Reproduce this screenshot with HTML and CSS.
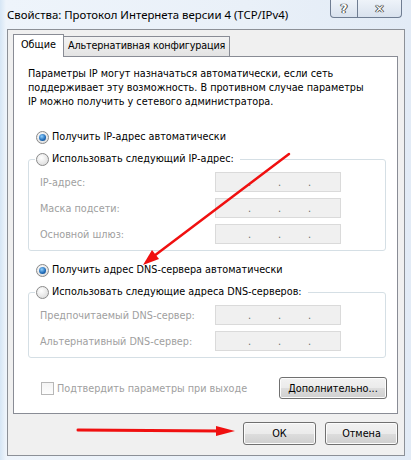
FILE: index.html
```html
<!DOCTYPE html>
<html lang="ru">
<head>
    <meta charset="UTF-8">
    <title>Свойства: Протокол Интернета версии 4 (TCP/IPv4)</title>
    <link rel="stylesheet" href="styles.css">
</head>
<body>
    <div class="window">
        <!-- Title bar -->
        <div class="titlebar">
            <span class="title">Свойства: Протокол Интернета версии 4 (TCP/IPv4)</span>
            <div class="caption">
                <span class="cap help">?</span>
                <span class="cap close">✕</span>
            </div>
        </div>

        <div class="client">
            <div class="tabs">
                <div class="tab active">Общие</div>
                <div class="tab">Альтернативная конфигурация</div>
            </div>

            <div class="panel">
                <p class="intro">Параметры IP могут назначаться автоматически, если сеть<br>поддерживает эту возможность. В противном случае параметры<br>IP можно получить у сетевого администратора.</p>

                <div class="option first"><span class="radio checked"></span>Получить IP-адрес автоматически</div>
                <fieldset class="group">
                    <legend class="option"><span class="radio"></span>Использовать следующий IP-адрес:</legend>
                    <div class="field"><span class="label">IP-адрес:</span><span class="ip"><i>.</i><i>.</i><i>.</i></span></div>
                    <div class="field"><span class="label">Маска подсети:</span><span class="ip"><i>.</i><i>.</i><i>.</i></span></div>
                    <div class="field"><span class="label">Основной шлюз:</span><span class="ip"><i>.</i><i>.</i><i>.</i></span></div>
                </fieldset>

                <div class="option second"><span class="radio checked"></span>Получить адрес DNS-сервера автоматически</div>
                <fieldset class="group">
                    <legend class="option"><span class="radio"></span>Использовать следующие адреса DNS-серверов:</legend>
                    <div class="field"><span class="label">Предпочитаемый DNS-сервер:</span><span class="ip"><i>.</i><i>.</i><i>.</i></span></div>
                    <div class="field"><span class="label">Альтернативный DNS-сервер:</span><span class="ip"><i>.</i><i>.</i><i>.</i></span></div>
                </fieldset>

                <div class="footer-row">
                    <span class="check"><span class="box"></span>Подтвердить параметры при выходе</span>
                    <button class="btn advanced">Дополнительно...</button>
                </div>
            </div>

            <div class="actions">
                <button class="btn">ОК</button>
                <button class="btn">Отмена</button>
            </div>
        </div>

        <!-- Red annotation arrows -->
        <svg class="arrows" width="411" height="460" viewBox="0 0 411 460">
            <line x1="289" y1="154" x2="154" y2="256" stroke="#f01010" stroke-width="2.5" stroke-linecap="round"/>
            <polygon points="143,265 159,259 152,250" fill="#f01010"/>
            <line x1="78" y1="430" x2="220" y2="431" stroke="#f01010" stroke-width="3" stroke-linecap="round"/>
            <polygon points="235,431 216,426 216,436" fill="#f01010"/>
        </svg>
    </div>
</body>
</html>
```

FILE: styles.css
```css
body {
    margin: 0;
    font-family: "DejaVu Sans Condensed", "DejaVu Sans", sans-serif;
    font-size: 10.75px;
    color: #000;
}
.window {
    position: relative;
    width: 411px;
    height: 460px;
    overflow: hidden;
    background: linear-gradient(90deg, #d6e6f5 0, #eef4fb 6px, #e9f0f8 60%, #e2ebf6 100%);
}
.titlebar {
    display: flex;
    height: 29px;
}
.title {
    padding: 7px 0 0 7px;
    font-family: "Noto Sans", sans-serif;
    font-size: 11.4px;
    line-height: 16px;
}
.caption {
    display: flex;
    margin-left: auto;
    margin-right: 9px;
    height: 18px;
}
.cap {
    display: flex;
    align-items: center;
    justify-content: center;
    height: 17px;
    border: 1px solid #6f7d92;
    border-top: none;
    background: linear-gradient(#eef3f9, #d9e2ee);
    color: #fff;
    font-family: "DejaVu Sans", sans-serif;
    font-weight: bold;
    font-size: 12px;
    text-shadow: 0 0 1px #333, 0 0 1px #333, 1px 0 0 #555, -1px 0 0 #555;
}
.help {
    width: 26px;
    border-radius: 0 0 0 4px;
}
.close {
    width: 43px;
    border-left: none;
    border-radius: 0 0 4px 0;
}
.client {
    box-sizing: border-box;
    height: 427px;
    margin: 0 6px 0 7px;
    padding: 5px 6px 0 5px;
    border: 1px solid #8c9097;
    background: #f0f0f0;
}
.tabs {
    display: flex;
    align-items: flex-end;
    height: 21px;
}
.tab {
    box-sizing: border-box;
    height: 20px;
    padding: 0 4px;
    line-height: 18px;
    letter-spacing: -0.15px;
    border: 1px solid #898c95;
    border-bottom: none;
    background: linear-gradient(#f3f3f3, #e3e3e3);
}
.tab.active {
    position: relative;
    z-index: 1;
    height: 23px;
    margin-bottom: -1px;
    padding: 0 7px;
    line-height: 20px;
    letter-spacing: 0;
    background: #fff;
}
.tab + .tab {
    margin-left: -1px;
}
.panel {
    box-sizing: border-box;
    height: 358px;
    padding: 0 11px 0 14px;
    border: 1px solid #898c95;
    background: #fff;
}
.intro {
    margin: 10px 0 0;
    line-height: 14px;
}
.option {
    display: flex;
    align-items: center;
    height: 14px;
    line-height: 14px;
}
.option.first {
    margin: 21px 0 0 8px;
}
.option.second {
    margin: 12px 0 0 8px;
}
.radio {
    box-sizing: border-box;
    position: relative;
    width: 13px;
    height: 13px;
    margin-right: 3px;
    border: 1px solid #8a8a8a;
    border-radius: 50%;
    background: radial-gradient(circle at 40% 35%, #ffffff, #e2e2e2 70%, #cfcfcf);
}
.radio.checked::after {
    content: "";
    position: absolute;
    left: 2px;
    top: 2px;
    width: 7px;
    height: 7px;
    border-radius: 50%;
    background: radial-gradient(circle at 40% 35%, #8fd0ff, #1d68b5 60%, #0b3f7a);
}
.group {
    margin: 8px 0 0;
    padding: 6px 44px 6px 11px;
    border: 1px solid #d5dfe5;
    border-radius: 3px;
}
.group legend {
    margin-left: -5px;
    padding: 0 6px 0 1px;
}
.field {
    display: flex;
    align-items: center;
    height: 20px;
    color: #a0a0a0;
}
.field + .field {
    margin-top: 6px;
}
.label {
    width: 175px;
}
.ip {
    box-sizing: border-box;
    position: relative;
    width: 126px;
    height: 20px;
    border: 1px solid #dadada;
    background: #f0f0f0;
}
.ip i {
    position: absolute;
    top: 3px;
    font-style: normal;
    color: #6d6d6d;
}
.ip i:nth-child(1) { left: 32px; }
.ip i:nth-child(2) { left: 62px; }
.ip i:nth-child(3) { left: 92px; }
.footer-row {
    display: flex;
    align-items: center;
    justify-content: space-between;
    margin-top: 19px;
}
.check {
    display: flex;
    align-items: center;
    margin-left: 13px;
    color: #a0a0a0;
}
.box {
    box-sizing: border-box;
    width: 13px;
    height: 13px;
    margin-right: 3px;
    border: 1px solid #b7b7b7;
    background: linear-gradient(#f4f4f4, #fdfdfd);
}
.btn {
    box-sizing: border-box;
    width: 73px;
    height: 23px;
    padding: 0;
    border: 1px solid #707070;
    border-radius: 3px;
    background: linear-gradient(#f2f2f2 0, #ebebeb 50%, #dddddd 51%, #cfcfcf 100%);
    box-shadow: inset 0 0 0 1px #fcfcfc;
    font-family: inherit;
    font-size: 10.75px;
    color: #000;
}
.btn.advanced {
    width: 108px;
    height: 22px;
    margin-right: -1px;
}
.actions {
    display: flex;
    justify-content: flex-end;
    gap: 9px;
    margin-top: 8px;
}
.arrows {
    position: absolute;
    left: 0;
    top: 0;
    pointer-events: none;
}
```
